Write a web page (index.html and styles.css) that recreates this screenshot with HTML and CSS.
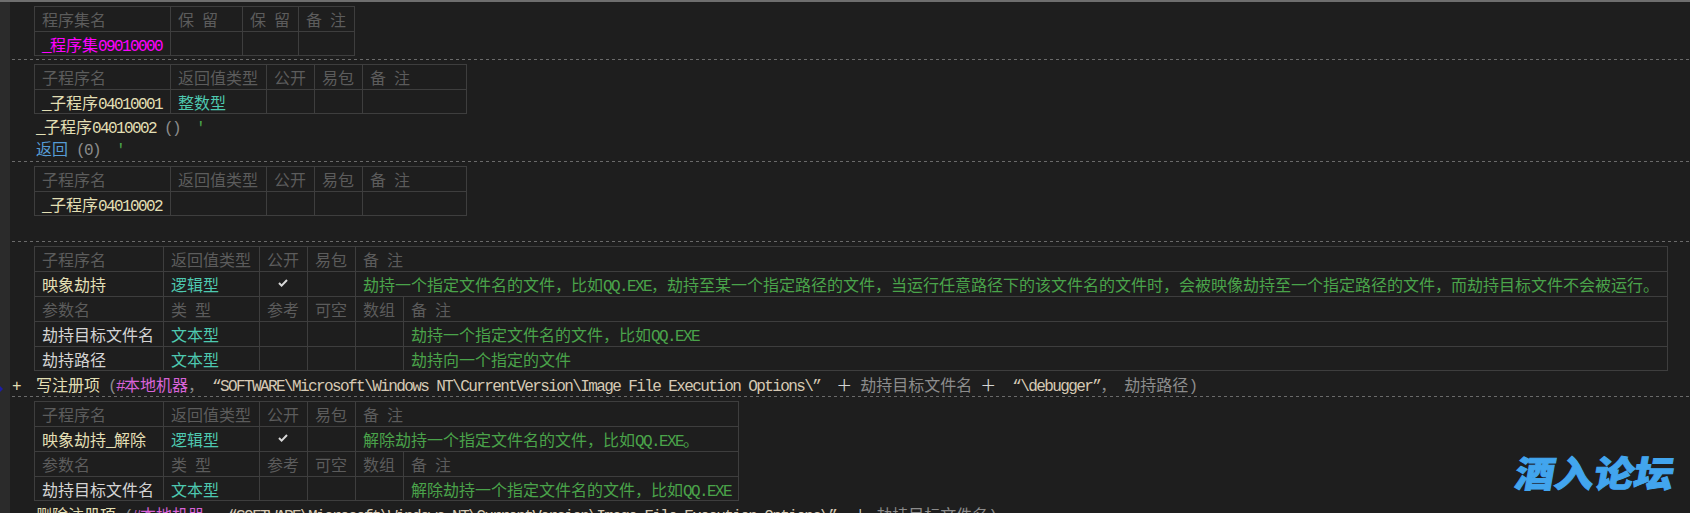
FILE: index.html
```html
<!DOCTYPE html>
<html lang="zh">
<head>
<meta charset="utf-8">
<title>程序集</title>
<link rel="stylesheet" href="styles.css">
</head>
<body>
<div class="topbar"></div>
<div class="page">
  <div class="gutter"><span class="marker"></span></div>
  <main class="main">
    <table class="grid t-set">
      <colgroup><col class="w136"><col class="w72"><col class="w56"><col class="w56"></colgroup>
      <tr class="head"><td>程序集名</td><td>保<span class="l"> </span>留</td><td>保<span class="l"> </span>留</td><td>备<span class="l"> </span>注</td></tr>
      <tr><td class="magenta"><span class="l">_</span>程序集<span class="l">09010000</span></td><td></td><td></td><td></td></tr>
    </table>
    <div class="sep"></div>
    <table class="grid t-sub">
      <colgroup><col class="w136"><col class="w96"><col class="w48"><col class="w48"><col class="w104"></colgroup>
      <tr class="head"><td>子程序名</td><td>返回值类型</td><td>公开</td><td>易包</td><td>备<span class="l"> </span>注</td></tr>
      <tr><td class="cream"><span class="l">_</span>子程序<span class="l">04010001</span></td><td class="teal">整数型</td><td></td><td></td><td></td></tr>
    </table>
    <div class="code first"><span class="cream"><span class="l">_</span>子程序<span class="l">04010002</span></span><span class="l grey"> ()  </span><span class="l green">'</span></div>
    <div class="code"><span class="blue">返回</span><span class="l grey"> (0)  </span><span class="l green">'</span></div>
    <div class="sep tight"></div>
    <table class="grid t-sub">
      <colgroup><col class="w136"><col class="w96"><col class="w48"><col class="w48"><col class="w104"></colgroup>
      <tr class="head"><td>子程序名</td><td>返回值类型</td><td>公开</td><td>易包</td><td>备<span class="l"> </span>注</td></tr>
      <tr><td class="cream"><span class="l">_</span>子程序<span class="l">04010002</span></td><td></td><td></td><td></td><td></td></tr>
    </table>
    <div class="sep wide"></div>
    <table class="grid t-wide">
      <colgroup><col class="w128"><col class="w96"><col class="w48"><col class="w48"><col class="w48"><col></colgroup>
      <tr class="head"><td>子程序名</td><td>返回值类型</td><td>公开</td><td>易包</td><td colspan="2">备<span class="l"> </span>注</td></tr>
      <tr><td class="cream">映象劫持</td><td class="teal">逻辑型</td><td class="check"><svg class="tick" viewBox="0 0 10 8" aria-hidden="true"><path d="M1 4l2.6 2.6L9 1"/></svg></td><td></td><td colspan="2" class="green">劫持一个指定文件名的文件，比如<span class="l">QQ.EXE</span>，劫持至某一个指定路径的文件，当运行任意路径下的该文件名的文件时，会被映像劫持至一个指定路径的文件，而劫持目标文件不会被运行。</td></tr>
      <tr class="head"><td>参数名</td><td>类<span class="l"> </span>型</td><td>参考</td><td>可空</td><td>数组</td><td>备<span class="l"> </span>注</td></tr>
      <tr><td class="light">劫持目标文件名</td><td class="teal">文本型</td><td></td><td></td><td></td><td class="green">劫持一个指定文件名的文件，比如<span class="l">QQ.EXE</span></td></tr>
      <tr><td class="light">劫持路径</td><td class="teal">文本型</td><td></td><td></td><td></td><td class="green">劫持向一个指定的文件</td></tr>
    </table>
    <div class="code plus"><span class="l cream">+  </span><span class="cream">写注册项</span><span class="l grey"> (</span><span class="purple"><span class="l">#</span>本地机器</span><span class="grey">，</span><span class="l str"> “SOFTWARE\Microsoft\Windows NT\CurrentVersion\Image File Execution Options\”  </span><span class="light">＋</span><span class="l"> </span><span class="grey">劫持目标文件名</span><span class="l"> </span><span class="light">＋</span><span class="l str">  “\debugger”</span><span class="grey">，</span><span class="l"> </span><span class="grey">劫持路径</span><span class="l grey">)</span></div>
    <div class="sep flush"></div>
    <table class="grid t-mid">
      <colgroup><col class="w128"><col class="w96"><col class="w48"><col class="w48"><col class="w48"><col></colgroup>
      <tr class="head"><td>子程序名</td><td>返回值类型</td><td>公开</td><td>易包</td><td colspan="2">备<span class="l"> </span>注</td></tr>
      <tr><td class="cream">映象劫持<span class="l">_</span>解除</td><td class="teal">逻辑型</td><td class="check"><svg class="tick" viewBox="0 0 10 8" aria-hidden="true"><path d="M1 4l2.6 2.6L9 1"/></svg></td><td></td><td colspan="2" class="green">解除劫持一个指定文件名的文件，比如<span class="l">QQ.EXE</span>。</td></tr>
      <tr class="head"><td>参数名</td><td>类<span class="l"> </span>型</td><td>参考</td><td>可空</td><td>数组</td><td>备<span class="l"> </span>注</td></tr>
      <tr><td class="light">劫持目标文件名</td><td class="teal">文本型</td><td></td><td></td><td></td><td class="green">解除劫持一个指定文件名的文件，比如<span class="l">QQ.EXE</span></td></tr>
    </table>
    <div class="code last"><span class="cream">删除注册项</span><span class="l grey"> (</span><span class="purple"><span class="l">#</span>本地机器</span><span class="grey">，</span><span class="l str"> “SOFTWARE\Microsoft\Windows NT\CurrentVersion\Image File Execution Options\”  </span><span class="light">＋</span><span class="l"> </span><span class="grey">劫持目标文件名</span><span class="l grey">)</span></div>
  </main>
</div>
<div class="logo">酒入论坛</div>
</body>
</html>
```
FILE: styles.css
```css
* { box-sizing: border-box; }
html, body {
  margin: 0;
  height: 513px;
  overflow: hidden;
  background: #1e1e1e;
}
body {
  position: relative;
  font-family: "Noto Sans CJK SC", "Liberation Sans", sans-serif;
  font-size: 16px;
  color: #d4d4d4;
}
.topbar { height: 2px; background: #6e6e6e; }
.page { display: flex; height: 511px; }
.gutter { width: 10px; flex: none; background: #2b2b2b; position: relative; }
.marker {
  position: absolute;
  left: 0;
  top: 384px;
  border-left: 3px solid #1c1ca8;
  border-top: 3px solid transparent;
  border-bottom: 3px solid transparent;
}
.main { flex: 1; padding-top: 4px; min-width: 0; }

.l {
  font-family: "Liberation Mono", monospace;
  letter-spacing: -1.6px;
  line-height: 0;
  white-space: pre;
}

.grid {
  margin-left: 24px;
  border-collapse: separate;
  border-spacing: 0;
  table-layout: fixed;
  border-top: 1px solid #3e3e3e;
  border-left: 1px solid #3e3e3e;
}
.grid td {
  height: 25px;
  padding: 0 0 1px 7px;
  border-right: 1px solid #3e3e3e;
  border-bottom: 1px solid #3e3e3e;
  line-height: 20px;
  white-space: nowrap;
  overflow: hidden;
  vertical-align: middle;
}
.grid tr:last-child td { height: 24px; padding-bottom: 0; }
.t-set { width: 321px; }
.t-sub { width: 433px; }
.t-wide { width: 1634px; }
.t-mid { width: 705px; }
.w136 { width: 136px; }
.w128 { width: 129px; }
.w104 { width: 104px; }
.w96 { width: 96px; }
.w72 { width: 72px; }
.w56 { width: 56px; }
.w48 { width: 48px; }

.head td { color: #5c5c5c; }
.magenta { color: #ff00ff; }
.cream { color: #e2dfb4; }
.teal { color: #4ec9b0; }
.green { color: #4aa34a; }
.blue { color: #569cd6; }
.light { color: #d4d4d4; }
.grey { color: #8c8c8c; }
.purple { color: #d863d8; }
.str { color: #d6c9b4; }

.grid td.check { padding: 0 2px 0 0; text-align: center; }
.tick {
  display: block;
  width: 10px;
  height: 8px;
  margin: -3px auto 0;
  fill: none;
  stroke: #d8d8d8;
  stroke-width: 2;
}

.sep {
  margin: 3px 0 4px 2px;
  height: 1px;
  background: repeating-linear-gradient(90deg, #6a6a6a 0 3px, transparent 3px 6px);
}
.sep.tight { margin-top: 1px; }
.sep.wide { margin-top: 25px; }
.sep.flush { margin-top: 0; }

.code {
  height: 22px;
  line-height: 20px;
  padding-left: 26px;
  white-space: pre;
}
.code.first { margin-top: 2px; }
.code.plus { margin-top: 3px; padding-left: 2px; }
.code.last { margin-top: 3px; }

.logo {
  position: absolute;
  left: 1516px;
  top: 448px;
  font-size: 36px;
  line-height: 46px;
  font-weight: 900;
  color: #42a5ee;
  -webkit-text-stroke: 1px #42a5ee;
  transform: skewX(-10deg) scaleX(1.1);
  transform-origin: left center;
  white-space: nowrap;
}
```
